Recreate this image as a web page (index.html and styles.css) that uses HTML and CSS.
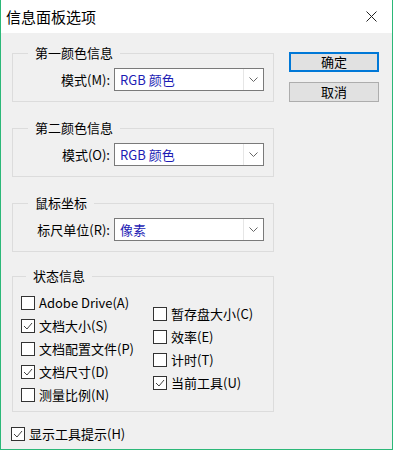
FILE: index.html
```html
<!DOCTYPE html>
<html lang="zh-CN">
<head>
	<meta charset="UTF-8">
	<meta name="viewport" content="width=device-width, initial-scale=1.0">
	<title>信息面板选项</title>
	<link rel="stylesheet" href="styles.css">
</head>
<body>
	<div class="window">
		<div class="titlebar">
			<span class="title">信息面板选项</span>
			<span class="close">
				<svg width="11" height="11" viewBox="0 0 11 11"><path d="M0.5 0.5 L10.5 10.5 M10.5 0.5 L0.5 10.5" stroke="#222" stroke-width="1" fill="none"/></svg>
			</span>
		</div>
		<div class="panel">
			<div class="groups">
				<fieldset class="group">
					<legend>第一颜色信息</legend>
					<div class="field">
						<label class="field-label">模式(M):</label>
						<div class="select">
							<span class="select-value">RGB 颜色</span>
							<span class="select-arrow"><svg width="9" height="5" viewBox="0 0 9 5"><path d="M0.5 0.5 L4.5 4.5 L8.5 0.5" stroke="#666" fill="none"/></svg></span>
						</div>
					</div>
				</fieldset>
				<fieldset class="group">
					<legend>第二颜色信息</legend>
					<div class="field">
						<label class="field-label">模式(O):</label>
						<div class="select">
							<span class="select-value">RGB 颜色</span>
							<span class="select-arrow"><svg width="9" height="5" viewBox="0 0 9 5"><path d="M0.5 0.5 L4.5 4.5 L8.5 0.5" stroke="#666" fill="none"/></svg></span>
						</div>
					</div>
				</fieldset>
				<fieldset class="group">
					<legend>鼠标坐标</legend>
					<div class="field">
						<label class="field-label">标尺单位(R):</label>
						<div class="select">
							<span class="select-value">像素</span>
							<span class="select-arrow"><svg width="9" height="5" viewBox="0 0 9 5"><path d="M0.5 0.5 L4.5 4.5 L8.5 0.5" stroke="#666" fill="none"/></svg></span>
						</div>
					</div>
				</fieldset>
				<fieldset class="group status">
					<legend>状态信息</legend>
					<div class="checks">
						<div class="check-col">
							<div class="check"><span class="box"></span>Adobe Drive(A)</div>
							<div class="check"><span class="box"><svg width="12" height="12" viewBox="0 0 12 12"><path d="M2 6 L5 9 L10 3" stroke="#444" fill="none"/></svg></span>文档大小(S)</div>
							<div class="check"><span class="box"></span>文档配置文件(P)</div>
							<div class="check"><span class="box"><svg width="12" height="12" viewBox="0 0 12 12"><path d="M2 6 L5 9 L10 3" stroke="#444" fill="none"/></svg></span>文档尺寸(D)</div>
							<div class="check"><span class="box"></span>测量比例(N)</div>
						</div>
						<div class="check-col right">
							<div class="check"><span class="box"></span>暂存盘大小(C)</div>
							<div class="check"><span class="box"></span>效率(E)</div>
							<div class="check"><span class="box"></span>计时(T)</div>
							<div class="check"><span class="box"><svg width="12" height="12" viewBox="0 0 12 12"><path d="M2 6 L5 9 L10 3" stroke="#444" fill="none"/></svg></span>当前工具(U)</div>
						</div>
					</div>
				</fieldset>
				<div class="check tooltips"><span class="box"><svg width="12" height="12" viewBox="0 0 12 12"><path d="M2 6 L5 9 L10 3" stroke="#444" fill="none"/></svg></span>显示工具提示(H)</div>
			</div>
			<div class="buttons">
				<button class="btn primary">确定</button>
				<button class="btn">取消</button>
			</div>
		</div>
	</div>
</body>
</html>
```

FILE: styles.css
```css
html, body {
	margin: 0;
	padding: 0;
	background-color: #fff;
}

.window {
	width: 393px;
	height: 450px;
	box-sizing: border-box;
	border: 1px solid #2bb878;
	border-top: none;
	background-color: #f0f0f0;
	font-family: "Noto Sans CJK SC", "Microsoft YaHei", sans-serif;
	font-size: 13px;
	color: #000;
}

.titlebar {
	height: 33px;
	background-color: #fff;
	display: flex;
	align-items: center;
	justify-content: space-between;
	padding-left: 5px;
}
.title {
	font-size: 15px;
	line-height: 20px;
}
.close {
	width: 46px;
	height: 33px;
	display: flex;
	align-items: center;
	justify-content: center;
	margin-right: -2px;
}

.panel {
	display: flex;
	gap: 15px;
	padding: 12px 0 0 11px;
}

.groups {
	width: 262px;
}

.group {
	margin: 18px 0 0 0;
	padding: 0 9px 10px 10px;
	border: 1px solid #dcdcdc;
	min-width: 0;
}
.group:first-child {
	margin-top: 0;
}
.group legend {
	margin-left: 5px;
	padding: 0 7px;
	line-height: 16px;
}

.field {
	margin-top: 7px;
	display: flex;
	align-items: center;
	justify-content: flex-end;
	gap: 4px;
}
.field-label {
	line-height: 16px;
}

.select {
	width: 150px;
	height: 23px;
	box-sizing: border-box;
	border: 1px solid #7a7a7a;
	background-color: #fff;
	display: flex;
	align-items: center;
}
.select-value {
	flex: 1;
	padding-left: 5px;
	color: #1c1cb4;
	line-height: 16px;
}
.select-arrow {
	width: 19px;
	height: 21px;
	border-left: 1px solid #e6e6e6;
	display: flex;
	align-items: center;
	justify-content: center;
}

.status {
	margin-top: 16px;
	padding: 0 8px 5px 8px;
}
.checks {
	margin-top: 7px;
	display: flex;
}
.check-col {
	width: 132px;
	flex-shrink: 0;
}
.check-col.right {
	flex-shrink: 1;
	width: auto;
	padding-top: 11px;
}

.check {
	height: 23px;
	display: flex;
	align-items: center;
	gap: 4px;
	line-height: 16px;
	white-space: nowrap;
}
.box {
	width: 14px;
	height: 14px;
	box-sizing: border-box;
	border: 1px solid #333;
	background-color: #fff;
	display: flex;
	align-items: center;
	justify-content: center;
}

.tooltips {
	margin-top: 10px;
	margin-left: -1px;
}

.buttons {
	margin-top: 7px;
	display: flex;
	flex-direction: column;
	gap: 10px;
}
.btn {
	width: 90px;
	height: 20px;
	box-sizing: border-box;
	padding: 0;
	font-family: inherit;
	font-size: 13px;
	line-height: 16px;
	color: #000;
	background-color: #e1e1e1;
	border: 1px solid #adadad;
	border-radius: 0;
}
.btn.primary {
	border: 2px solid #0078d7;
}
```
